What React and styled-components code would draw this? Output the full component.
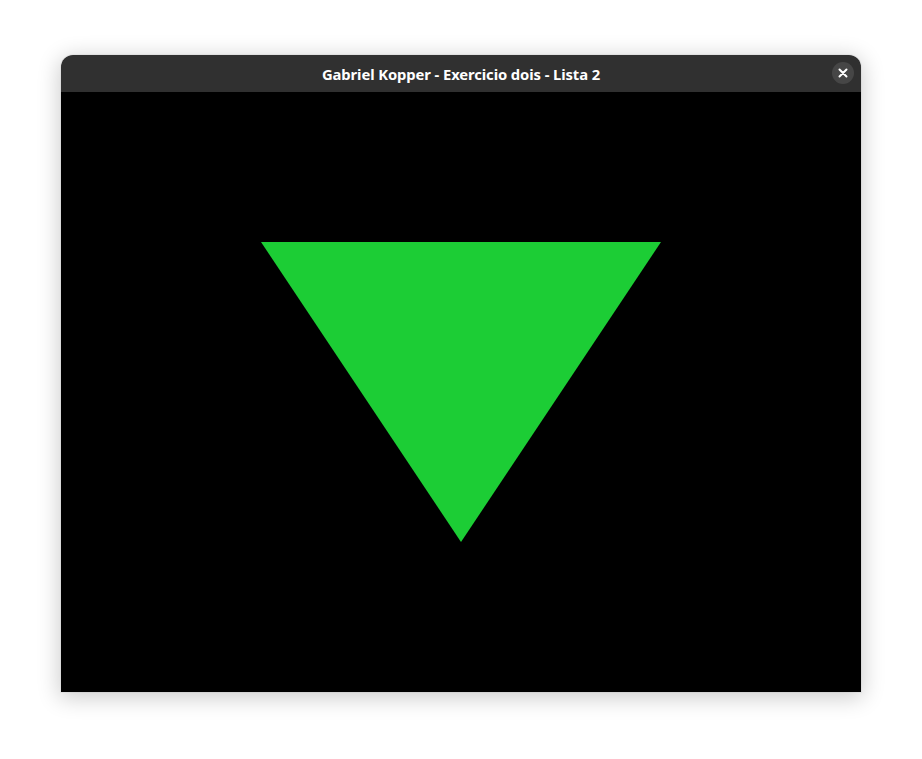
import React from 'react';
import styled, { createGlobalStyle } from 'styled-components';

const Global = createGlobalStyle`
  html, body {
    margin: 0;
    padding: 0;
    background: #ffffff;
  }
`;

const Desktop = styled.div`
  width: 922px;
  height: 759px;
  padding: 55px 0 0 61px;
  box-sizing: border-box;
`;

const Window = styled.div`
  width: 800px;
  display: flex;
  flex-direction: column;
  border-radius: 12px 12px 0 0;
  overflow: hidden;
  box-shadow: 0 4px 22px 2px rgba(0, 0, 0, 0.2), 0 0 0 1px rgba(0, 0, 0, 0.04);
`;

const TitleBar = styled.div`
  height: 37px;
  background: #303030;
  display: flex;
  align-items: center;
  justify-content: center;
  position: relative;
`;

const Title = styled.span`
  color: #ffffff;
  font-family: "Noto Sans", "Open Sans", sans-serif;
  font-weight: 700;
  font-size: 14.8px;
  letter-spacing: -0.1px;
`;

const CloseButton = styled.div`
  position: absolute;
  right: 7px;
  top: 7px;
  width: 22px;
  height: 22px;
  border-radius: 50%;
  background: #464646;
  display: flex;
  align-items: center;
  justify-content: center;
`;

const Canvas = styled.div`
  width: 800px;
  height: 600px;
  background: #000000;
  display: block;
`;

function App() {
  return (
    <Desktop>
      <Global />
      <Window>
        <TitleBar>
          <Title>Gabriel Kopper - Exercicio dois - Lista 2</Title>
          <CloseButton>
            <svg width="10" height="10" viewBox="0 0 10 10">
              <path d="M1.5 1.5 L8.5 8.5 M8.5 1.5 L1.5 8.5" stroke="#ffffff" strokeWidth="2" strokeLinecap="round" />
            </svg>
          </CloseButton>
        </TitleBar>
        <Canvas>
          <svg width="800" height="600" viewBox="0 0 800 600">
            <polygon points="200,150 600,150 400,450" fill="#1ccd35" />
          </svg>
        </Canvas>
      </Window>
    </Desktop>
  );
}

export default App;
